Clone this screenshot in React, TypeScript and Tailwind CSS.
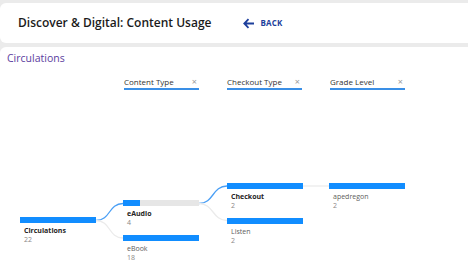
import React from "react";

function Node({
  x,
  y,
  label,
  value,
  bold,
  fill = 1,
}: {
  x: number;
  y: number;
  label: string;
  value: string;
  bold?: boolean;
  fill?: number;
}) {
  return (
    <div className="absolute w-[76px]" style={{ left: x, top: y }}>
      <div className="h-[6px] w-full bg-[#e6e6e6] relative">
        <div className="absolute left-0 top-0 h-full bg-[#118dff]" style={{ width: `${fill * 100}%` }} />
      </div>
      <div className="pl-[4px] pt-[3px] text-[7px]">
        <div className={"leading-[9px] " + (bold ? "font-bold text-[#252423]" : "text-[#605e5c]")}>{label}</div>
        <div className="leading-[9px] text-[#8a8886]">{value}</div>
      </div>
    </div>
  );
}

function Filter({ label }: { label: string }) {
  return (
    <div className="w-[75px] flex items-center justify-between border-b-2 border-[#3a8fe6] pb-[1px] text-[8px] text-[#333]">
      <span className="leading-[10px]">{label}</span>
      <span className="text-[#999] text-[9px] leading-[10px] pr-[2px]">×</span>
    </div>
  );
}

export default function App() {
  return (
    <div
      className="w-[468px] h-[280px] bg-[#ebebeb] overflow-hidden pt-[3px]"
      style={{ fontFamily: '"Open Sans", "Segoe UI", Roboto, sans-serif' }}
    >
      <div className="h-[40px] bg-white rounded-l-[6px] flex items-center pl-[18px]">
        <div className="text-[12px] font-semibold text-[#1b1b1b]">
          Discover &amp; Digital: Content Usage
        </div>
        <div className="ml-[32px] flex items-center gap-[5px] text-[#1d3f9c]">
          <svg width="12" height="11" viewBox="0 0 12 11" fill="none" stroke="currentColor" strokeWidth="1.8">
            <path d="M11 5.5H1.5M5.5 1.2 1.3 5.5l4.2 4.3" />
          </svg>
          <span className="text-[8px] font-bold tracking-[0.2px]">BACK</span>
        </div>
      </div>
      <div className="mt-[4px] h-[240px] bg-white rounded-l-[6px] relative">
        <div className="pl-[7px] pt-[4px] text-[10.5px] text-[#5b3d9e] leading-[14px]">Circulations</div>
        <div className="flex gap-[28px] pl-[124px] mt-[12px]">
          <Filter label="Content Type" />
          <Filter label="Checkout Type" />
          <Filter label="Grade Level" />
        </div>
        <svg className="absolute left-0 top-0" width="468" height="240" fill="none">
          <path d="M96 173.5 C111 173.5 108 156.5 123 156.5" stroke="#4a9ff5" strokeWidth="1.3" />
          <path d="M96 173.5 C111 173.5 108 191 123 191" stroke="#ebebeb" strokeWidth="1.3" />
          <path d="M199 156.5 C214 156.5 212 139 227 139" stroke="#4a9ff5" strokeWidth="1.3" />
          <path d="M199 156.5 C214 156.5 212 173.5 227 173.5" stroke="#ebebeb" strokeWidth="1.3" />
          <path d="M301 139 L329 139" stroke="#ebebeb" strokeWidth="1.3" />
        </svg>
        <Node x={20} y={170} label="Circulations" value="22" bold />
        <Node x={123} y={153} label="eAudio" value="4" bold fill={0.23} />
        <Node x={123} y={188} label="eBook" value="18" />
        <Node x={227} y={136} label="Checkout" value="2" bold />
        <Node x={227} y={171} label="Listen" value="2" />
        <Node x={329} y={136} label="apedregon" value="2" />
      </div>
    </div>
  );
}
